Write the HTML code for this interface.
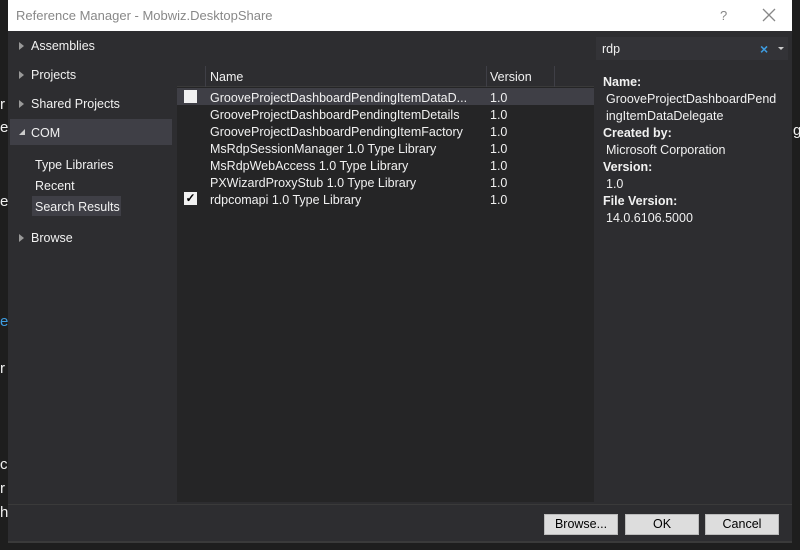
<!DOCTYPE html>
<html><head><style>
*{margin:0;padding:0;box-sizing:border-box}
body{width:800px;height:550px;background:#1e1e1e;font-family:"Liberation Sans",sans-serif;font-size:12.5px;color:#f1f1f1;position:relative;overflow:hidden}
.a{position:absolute}
.tri{position:absolute;left:19px;width:0;height:0;border-top:4px solid transparent;border-bottom:4px solid transparent;border-left:5px solid #999}
.row{position:absolute;left:210px;white-space:nowrap}
.ver{position:absolute;left:490px}
.btn{position:absolute;top:514px;width:74px;height:21px;background:#dddddd;border:1px solid #bbb;color:#000;text-align:center;line-height:19px;font-size:12.5px}
.lbl{font-weight:bold}
</style></head><body>
<div class="a" style="left:8px;top:0;width:784px;height:542px;background:#2d2d30"></div>
<div class="a" style="left:8px;top:0;width:784px;height:31px;background:#fff"></div>
<div class="a" style="left:16px;top:8px;color:#888;font-size:13px">Reference Manager - Mobwiz.DesktopShare</div>
<div class="a" style="left:720px;top:8px;color:#888;font-size:13px">?</div>
<svg class="a" style="left:762px;top:8px" width="14" height="14"><path d="M1 1L13 13M13 1L1 13" stroke="#888" stroke-width="1.3"/></svg>
<!-- stray left chars -->
<div class="a" style="left:0;top:96px;font-size:15px">r</div>
<div class="a" style="left:0;top:119px;font-size:15px">e</div>
<div class="a" style="left:0;top:193px;font-size:15px">e</div>
<div class="a" style="left:0;top:313px;font-size:15px;color:#3e9ce0">e</div>
<div class="a" style="left:0;top:360px;font-size:15px">r</div>
<div class="a" style="left:0;top:456px;font-size:15px">c</div>
<div class="a" style="left:0;top:480px;font-size:15px">r</div>
<div class="a" style="left:0;top:504px;font-size:15px">h</div>
<div class="a" style="left:793px;top:122px;font-size:15px">g</div>
<!-- left nav -->
<div class="tri" style="top:42px"></div><div class="a" style="left:31px;top:39px">Assemblies</div>
<div class="tri" style="top:71px"></div><div class="a" style="left:31px;top:68px">Projects</div>
<div class="tri" style="top:100px"></div><div class="a" style="left:31px;top:97px">Shared Projects</div>
<div class="a" style="left:10px;top:119px;width:162px;height:26px;background:#3f3f46"></div>
<div class="a" style="left:19px;top:129px;width:0;height:0;border-left:6px solid transparent;border-bottom:6px solid #ccc"></div>
<div class="a" style="left:31px;top:126px">COM</div>
<div class="a" style="left:35px;top:158px">Type Libraries</div>
<div class="a" style="left:35px;top:179px">Recent</div>
<div class="a" style="left:32px;top:196px;width:89px;height:20px;background:#3f3f46"></div>
<div class="a" style="left:35px;top:200px">Search Results</div>
<div class="tri" style="top:234px"></div><div class="a" style="left:31px;top:231px">Browse</div>
<!-- list -->
<div class="a" style="left:177px;top:66px;width:417px;height:436px;background:#252526"></div>
<div class="a" style="left:177px;top:66px;width:417px;height:21px;background:#2d2d30;border-bottom:1px solid #3a3a3a"></div>
<div class="a" style="left:205px;top:66px;width:1px;height:21px;background:#3f3f46"></div>
<div class="a" style="left:486px;top:66px;width:1px;height:21px;background:#3f3f46"></div>
<div class="a" style="left:554px;top:66px;width:1px;height:21px;background:#3f3f46"></div>
<div class="a" style="left:210px;top:70px">Name</div>
<div class="a" style="left:490px;top:70px">Version</div>
<div class="a" style="left:177px;top:88px;width:417px;height:17px;background:#3f3f46"></div>
<div class="a" style="left:184px;top:90px;width:13px;height:13px;background:#f1f1f1"></div>
<div class="a" style="left:184px;top:192px;width:13px;height:13px;background:#f1f1f1;color:#000;font-size:12px;line-height:13px;text-align:center;font-weight:bold">✓</div>
<div class="row" style="top:91px">GrooveProjectDashboardPendingItemDataD...</div><div class="ver" style="top:91px">1.0</div>
<div class="row" style="top:108px">GrooveProjectDashboardPendingItemDetails</div><div class="ver" style="top:108px">1.0</div>
<div class="row" style="top:125px">GrooveProjectDashboardPendingItemFactory</div><div class="ver" style="top:125px">1.0</div>
<div class="row" style="top:142px">MsRdpSessionManager 1.0 Type Library</div><div class="ver" style="top:142px">1.0</div>
<div class="row" style="top:159px">MsRdpWebAccess 1.0 Type Library</div><div class="ver" style="top:159px">1.0</div>
<div class="row" style="top:176px">PXWizardProxyStub 1.0 Type Library</div><div class="ver" style="top:176px">1.0</div>
<div class="row" style="top:193px">rdpcomapi 1.0 Type Library</div><div class="ver" style="top:193px">1.0</div>
<!-- search -->
<div class="a" style="left:596px;top:37px;width:192px;height:23px;background:#333337"></div>
<div class="a" style="left:602px;top:42px">rdp</div>
<div class="a" style="left:760px;top:41px;color:#3e9ce0;font-size:14px;font-weight:bold">×</div>
<div class="a" style="left:778px;top:47px;width:0;height:0;border-left:3px solid transparent;border-right:3px solid transparent;border-top:3px solid #ccc"></div>
<!-- details -->
<div class="a" style="left:596px;top:64px;width:196px;height:440px;background:#2d2d30"></div>
<div class="a" style="left:603px;top:74px;line-height:17px">
<div class="lbl">Name:</div>
<div style="padding-left:3px">GrooveProjectDashboardPend</div>
<div style="padding-left:3px">ingItemDataDelegate</div>
<div class="lbl">Created by:</div>
<div style="padding-left:3px">Microsoft Corporation</div>
<div class="lbl">Version:</div>
<div style="padding-left:3px">1.0</div>
<div class="lbl">File Version:</div>
<div style="padding-left:3px">14.0.6106.5000</div>
</div>
<!-- footer -->
<div class="a" style="left:8px;top:504px;width:784px;height:1px;background:#3a3a3a"></div>
<div class="a" style="left:8px;top:541px;width:784px;height:2px;background:#3a3a3a"></div>
<div class="btn" style="left:544px">Browse...</div>
<div class="btn" style="left:625px">OK</div>
<div class="btn" style="left:705px">Cancel</div>
</body></html>
